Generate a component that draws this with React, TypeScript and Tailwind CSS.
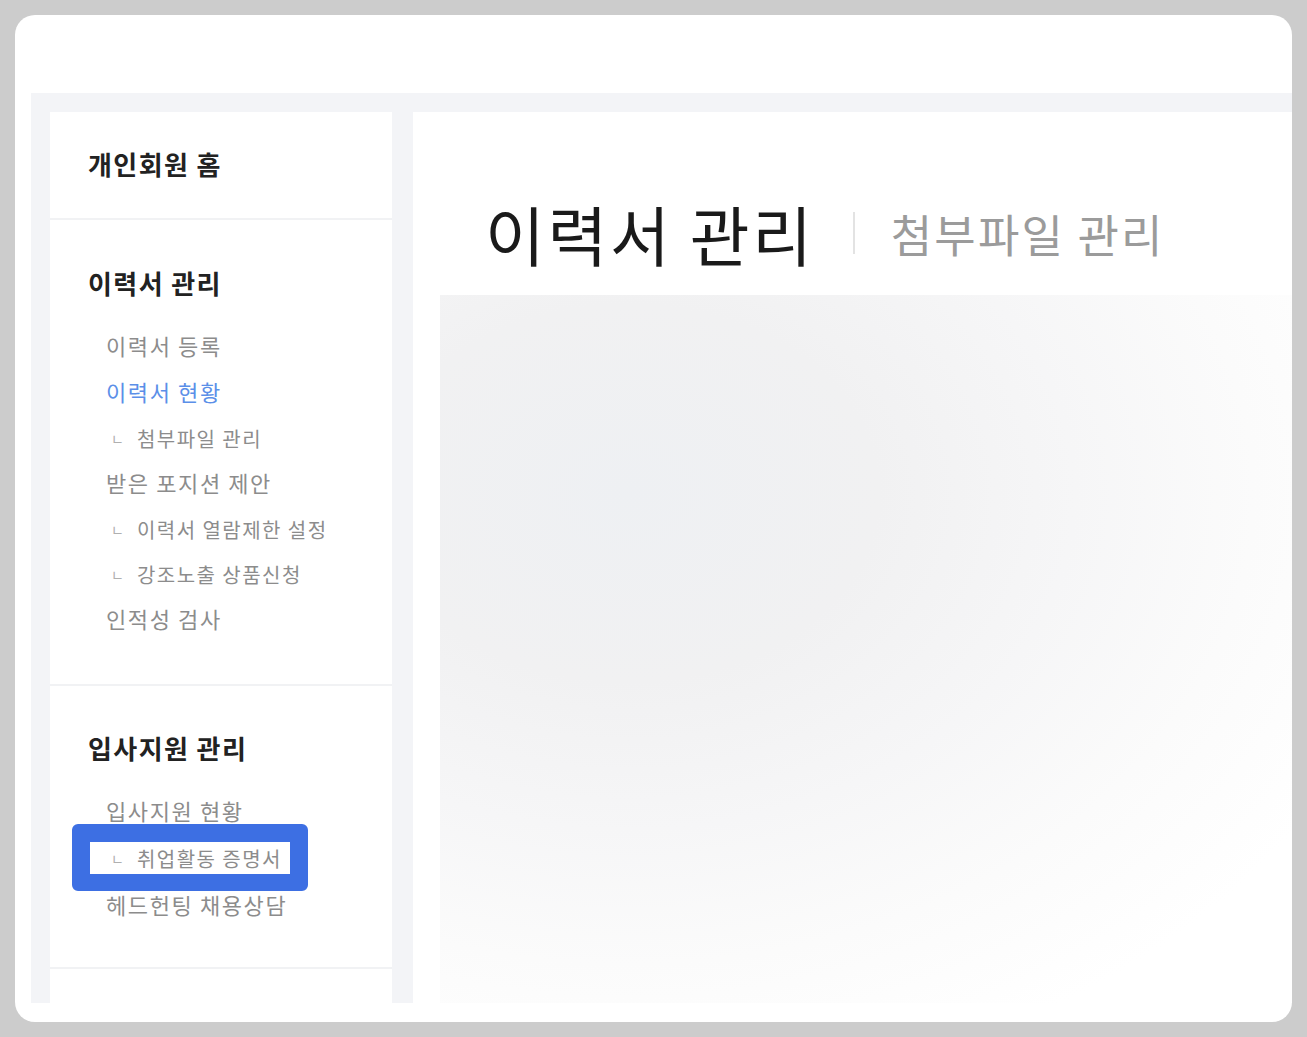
import React from "react";

const Sub = ({ children }: { children: React.ReactNode }) => (
  <div className="flex items-center h-full">
    <span className="w-[31px] pl-[5px] text-[14px] leading-none text-[#b0b0b0] pt-[2px]">ㄴ</span>
    <span className="text-[20px] text-[#8c8c8c] tracking-[1.45px] pt-[4px]">{children}</span>
  </div>
);

const Item = ({ children, blue, h }: { children: React.ReactNode; blue?: boolean; h: string }) => (
  <div className={`${h} flex items-center text-[22px] tracking-[1.6px] ${blue ? "text-[#5b8fe8]" : "text-[#8c8c8c]"}`}>
    {children}
  </div>
);

export default function App() {
  return (
    <div className="w-[1307px] h-[1037px] bg-[#cccccc] p-[15px] font-['Noto_Sans_CJK_KR','Noto_Sans',sans-serif]">
      <div className="w-full h-full rounded-[20px] bg-white overflow-hidden pt-[78px] pl-[16px] pb-[19px] flex flex-col">
        <div className="flex-1 bg-[#f3f4f7] pt-[19px] pl-[19px] flex gap-[21px] min-h-0">
          {/* Sidebar */}
          <div className="w-[342px] bg-white flex flex-col">
            <div className="h-[106px] flex items-center pl-[38px] pb-[3px]">
              <span className="text-[26px] font-bold text-[#222222] tracking-[1.4px]">개인회원 홈</span>
            </div>
            <div className="h-[2px] bg-[#f1f2f4]" />
            <div className="pt-[46px] pb-[42px]">
              <div className="h-[32px] flex items-center pl-[38px] mb-[25px]">
                <span className="text-[26px] font-bold text-[#222222] tracking-[1.4px]">이력서 관리</span>
              </div>
              <div className="pl-[56px] flex flex-col">
                <Item h="h-[45.5px]">이력서 등록</Item>
                <Item h="h-[45.5px]" blue>이력서 현황</Item>
                <div className="h-[45.5px]"><Sub>첨부파일 관리</Sub></div>
                <Item h="h-[45.5px]">받은 포지션 제안</Item>
                <div className="h-[45.5px]"><Sub>이력서 열람제한 설정</Sub></div>
                <div className="h-[45.5px]"><Sub>강조노출 상품신청</Sub></div>
                <Item h="h-[45.5px]">인적성 검사</Item>
              </div>
            </div>
            <div className="h-[2px] bg-[#f1f2f4]" />
            <div className="pt-[46px] pb-[39px]">
              <div className="h-[32px] flex items-center pl-[38px] mb-[23px]">
                <span className="text-[26px] font-bold text-[#222222] tracking-[1.4px]">입사지원 관리</span>
              </div>
              <div className="pl-[56px] flex flex-col">
                <Item h="h-[47px]">입사지원 현황</Item>
                <div className="h-[47px] relative">
                  <Sub>취업활동 증명서</Sub>
                  <div className="absolute left-[-34px] top-[-10px] w-[236px] h-[67px] border-[18px] border-b-[17px] border-[#3d6fe3] rounded-[6px] z-10" />
                </div>
                <Item h="h-[47px]">헤드헌팅 채용상담</Item>
              </div>
            </div>
            <div className="h-[2px] bg-[#f1f2f4]" />
            <div className="flex-1" />
          </div>

          {/* Main */}
          <div className="flex-1 bg-white flex flex-col pt-[71px]">
            <div className="h-[100px] flex items-center pl-[72px]">
              <span className="text-[65px] font-normal text-[#1a1a1a] tracking-[2.7px] leading-none">이력서 관리</span>
              <span className="ml-[38px] w-[2px] h-[42px] bg-[#e3e3e3]" />
              <span className="ml-[36px] text-[45px] text-[#9b9b9b] tracking-[2.2px] leading-none">첨부파일 관리</span>
            </div>
            <div className="flex-1 mt-[12px] ml-[27px] bg-[radial-gradient(ellipse_105%_95%_at_22%_28%,#eef0f3_0%,#f1f1f2_28%,#f6f6f7_50%,#fbfbfb_70%,#ffffff_90%)]" />
          </div>
        </div>
      </div>
    </div>
  );
}
